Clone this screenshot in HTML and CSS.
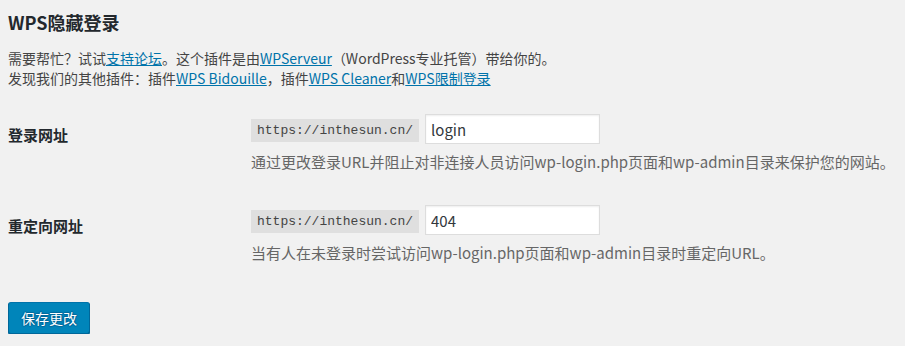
FILE: index.html
```html
<!DOCTYPE html>
<html lang="zh-CN">
<head>
<meta charset="utf-8">
<link rel="stylesheet" href="styles.css">
</head>
<body>
<div class="wrap">
  <h1 class="title">WPS隐藏登录</h1>
  <div class="intro">
    <p>需要帮忙？试试<a href="#">支持论坛</a>。这个插件是由<a href="#">WPServeur</a>（WordPress专业托管）带给你的。</p>
    <p>发现我们的其他插件：插件<a href="#">WPS Bidouille</a>，插件<a href="#">WPS Cleaner</a>和<a href="#">WPS限制登录</a></p>
  </div>
  <div class="form">
    <div class="row">
      <div class="label">登录网址</div>
      <div class="field">
        <div class="inputline">
          <code class="prefix">https://inthesun.cn/</code>
          <input class="text" type="text" value="login">
        </div>
        <p class="desc">通过更改登录URL并阻止对非连接人员访问wp-login.php页面和wp-admin目录来保护您的网站。</p>
      </div>
    </div>
    <div class="row">
      <div class="label">重定向网址</div>
      <div class="field">
        <div class="inputline">
          <code class="prefix">https://inthesun.cn/</code>
          <input class="text" type="text" value="404">
        </div>
        <p class="desc">当有人在未登录时尝试访问wp-login.php页面和wp-admin目录时重定向URL。</p>
      </div>
    </div>
  </div>
  <div class="submit">
    <button class="button-primary" type="button">保存更改</button>
  </div>
</div>
</body>
</html>
```
FILE: styles.css
```css
html, body {
  margin: 0;
  padding: 0;
  background: #f1f1f1;
}
body {
  font-family: "Noto Sans CJK SC", "Noto Sans", sans-serif;
  color: #444;
  font-size: 14px;
}
.wrap {
  padding: 10px 8px 0 8px;
}
.title {
  margin: 0;
  font-size: 18px;
  line-height: 24px;
  font-weight: 600;
  color: #23282d;
}
.intro {
  margin-top: 14px;
}
.intro p {
  margin: 0;
  line-height: 20px;
  font-size: 14px;
}
.intro a {
  color: #0073aa;
  text-decoration: underline;
}
.form {
  margin-top: 26px;
  display: flex;
  flex-direction: column;
  gap: 33px;
}
.row {
  display: grid;
  grid-template-columns: 243px 1fr;
}
.label {
  padding-top: 11px;
  font-size: 15px;
  line-height: 20px;
  font-weight: 600;
  color: #23282d;
}
.inputline {
  display: flex;
  align-items: center;
  gap: 6px;
}
.prefix {
  font-family: "Liberation Mono", monospace;
  font-size: 13px;
  line-height: 23px;
  padding: 0 6px;
  background: #dfdfdf;
  color: #444;
  margin-top: 3px;
}
.text {
  box-sizing: border-box;
  width: 175px;
  height: 30px;
  margin: 0;
  padding: 0 5px;
  border: 1px solid #ddd;
  box-shadow: inset 0 1px 2px rgba(0,0,0,0.07);
  background: #fff;
  font-family: "Noto Sans CJK SC", "Noto Sans", sans-serif;
  font-size: 15px;
  color: #32373c;
  outline: none;
}
.desc {
  margin: 8px 0 0 0;
  font-size: 15px;
  line-height: 20px;
  color: #666;
}
.submit {
  margin-top: 39px;
}
.button-primary {
  box-sizing: border-box;
  height: 32px;
  width: 82px;
  padding: 0 10px 1px;
  background: #0085ba;
  border: 1px solid #0073aa;
  border-color: #0073aa #006799 #006799;
  border-radius: 3px;
  box-shadow: 0 1px 0 #006799;
  color: #fff;
  font-family: "Noto Sans CJK SC", sans-serif;
  font-size: 14px;
  line-height: 28px;
  text-shadow: 0 -1px 1px #006799, 1px 0 1px #006799, 0 1px 1px #006799, -1px 0 1px #006799;
  cursor: pointer;
}
```
